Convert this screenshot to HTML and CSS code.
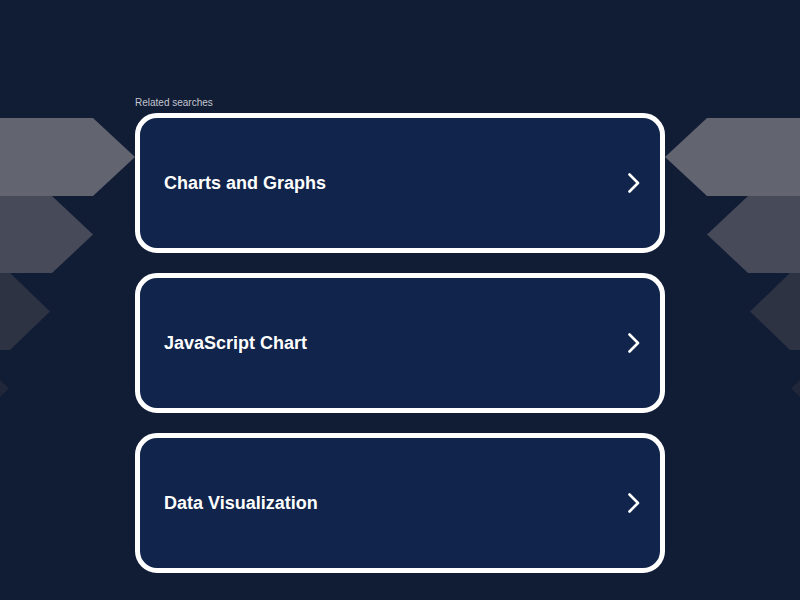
FILE: index.html
```html
<!DOCTYPE html>
<html lang="en">
<head>
<meta charset="utf-8">
<title>Related searches</title>
<link rel="stylesheet" href="styles.css">
</head>
<body>
<svg class="deco" width="800" height="600" viewBox="0 0 800 600" aria-hidden="true">
  <g class="left">
    <polygon class="s1" points="0,118 93,118 135,157 93,196 0,196"/>
    <polygon class="s2" points="0,196 52,196 93,234.5 52,273 0,273"/>
    <polygon class="s3" points="0,273 10,273 50,311.5 10,350 0,350"/>
    <polygon class="s4" points="-32,350 -32,350 9,388.5 -32,427 -32,427"/>
  </g>
  <g class="right">
    <polygon class="s1" points="800,118 707,118 665,157 707,196 800,196"/>
    <polygon class="s2" points="800,196 748,196 707,234.5 748,273 800,273"/>
    <polygon class="s3" points="800,273 790,273 750,311.5 790,350 800,350"/>
    <polygon class="s4" points="832,350 832,350 791,388.5 832,427 832,427"/>
  </g>
</svg>
<main class="wrap">
  <div class="label">Related searches</div>
  <ul class="list">
    <li><a class="card" href="#"><span class="title">Charts and Graphs</span><svg class="chev" width="14" height="20" viewBox="0 0 14 20"><polyline points="2.5,1.5 11,10 2.5,18.5"/></svg></a></li>
    <li><a class="card" href="#"><span class="title">JavaScript Chart</span><svg class="chev" width="14" height="20" viewBox="0 0 14 20"><polyline points="2.5,1.5 11,10 2.5,18.5"/></svg></a></li>
    <li><a class="card" href="#"><span class="title">Data Visualization</span><svg class="chev" width="14" height="20" viewBox="0 0 14 20"><polyline points="2.5,1.5 11,10 2.5,18.5"/></svg></a></li>
  </ul>
</main>
</body>
</html>
```
FILE: styles.css
```css
html, body {
  margin: 0;
  padding: 0;
  background: #111c35;
  height: 100%;
  overflow: hidden;
}
body {
  font-family: "Liberation Sans", Arial, sans-serif;
  position: relative;
}
.deco {
  position: absolute;
  top: 0;
  left: 0;
  z-index: 0;
}
.s1 { fill: #62646f; }
.s2 { fill: #474a59; }
.s3 { fill: #2e3344; }
.s4 { fill: #20273a; }
.wrap {
  position: relative;
  z-index: 1;
  width: 530px;
  margin: 0 auto;
  padding-top: 97px;
}
.label {
  color: #c2c6d0;
  font-size: 10px;
  line-height: 12px;
  margin-bottom: 4px;
}
.list {
  list-style: none;
  margin: 0;
  padding: 0;
  display: flex;
  flex-direction: column;
  gap: 20px;
}
.card {
  box-sizing: border-box;
  height: 140px;
  border: 5px solid #ffffff;
  border-radius: 22px;
  background: #11244b;
  display: flex;
  align-items: center;
  justify-content: space-between;
  padding: 0 19px 0 24px;
  text-decoration: none;
}
.title {
  color: #ffffff;
  font-weight: bold;
  font-size: 18px;
}
.chev {
  display: block;
}
.chev polyline {
  fill: none;
  stroke: #ffffff;
  stroke-width: 2.6;
  stroke-linecap: round;
  stroke-linejoin: round;
}
```
